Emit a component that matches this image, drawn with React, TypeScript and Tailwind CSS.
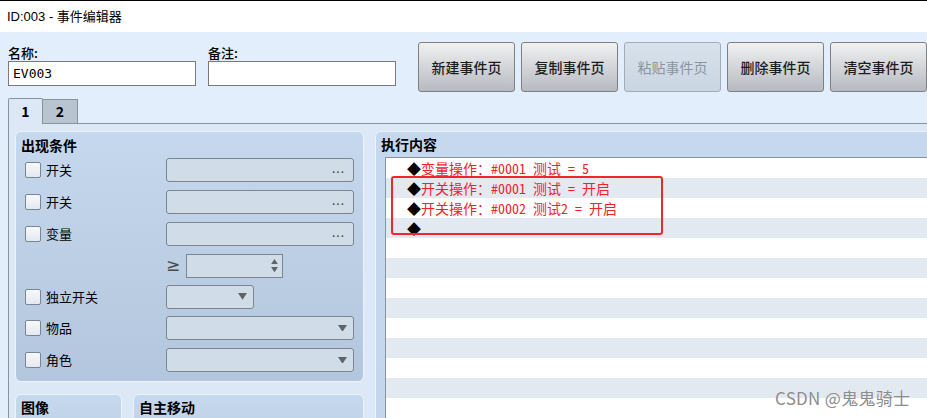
import React from 'react';

/* ── small pieces ──────────────────────────────── */

const Tri: React.FC<{ up?: boolean; size?: number }> = ({ up, size = 8 }) => (
  <svg width={size} height={size * 0.75} viewBox="0 0 8 6" className="block">
    {up ? <path d="M0 6 L4 0 L8 6 Z" fill="#5f6368" /> : <path d="M0 0 L8 0 L4 6 Z" fill="#5f6368" />}
  </svg>
);

const CheckBox: React.FC = () => (
  <div className="w-[16px] h-[16px] rounded-[2px] border border-[#7b8592] bg-linear-to-b from-[#f7f9fb] to-[#e4e9ef] shrink-0" />
);

const Field: React.FC<{ w: string; kind: 'dots' | 'drop' }> = ({ w, kind }) => (
  <div className={`${w} h-[24px] rounded-[3px] border border-[#7d8690] bg-[#d0dce8] flex items-center justify-end pr-[6px]`}>
    {kind === 'dots' ? (
      <span className="text-[12px] leading-none text-[#3a3a3a] tracking-[1px] -mt-[4px] mr-[2px]">...</span>
    ) : (
      <Tri size={9} />
    )}
  </div>
);

const CondRow: React.FC<{ label?: string; h?: string; children: React.ReactNode }> = ({ label, h = 'h-[32px]', children }) => (
  <div className={`flex items-center ${h}`}>
    <div className="w-[141px] flex items-center">
      {label && (
        <>
          <CheckBox />
          <span className="ml-[5px] text-[13px] leading-[16px]">{label}</span>
        </>
      )}
    </div>
    {children}
  </div>
);

const Btn: React.FC<{ label: string; disabled?: boolean }> = ({ label, disabled }) => (
  <div
    className={
      disabled
        ? 'w-[97px] h-[50px] shrink-0 rounded-[3px] border border-[#a3acb6] bg-linear-to-b from-[#d8e2ec] to-[#c9d5e1] text-[#8b949e] flex items-center justify-center text-[14px]'
        : 'w-[97px] h-[50px] shrink-0 rounded-[3px] border border-[#7f7f7f] bg-linear-to-b from-[#f1f1f1] to-[#b6bac1] text-[#1c1c1c] flex items-center justify-center text-[14px] font-medium'
    }
  >
    {label}
  </div>
);

const groupCls =
  'rounded-[6px] border border-[#edf3fa] bg-linear-to-b from-[#c6d8ed] to-[#b3c6dd]';

const lines = [
  '变量操作：#0001 测试 = 5',
  '开关操作：#0001 测试 = 开启',
  '开关操作：#0002 测试2 = 开启',
  '',
];

export default function App() {
  return (
    <div className="relative w-[927px] h-[418px] overflow-hidden bg-[#e2eefb] text-black font-['Noto_Sans_CJK_SC','Noto_Sans',sans-serif]">
      {/* Title bar */}
      <div className="h-[32px] bg-white border-t border-black flex items-center pl-[7px] text-[13px] font-['Liberation_Sans','Noto_Sans_CJK_SC',sans-serif]">
        ID:003 - 事件编辑器
      </div>

      <div className="pl-[8px]">
        {/* Name / note / buttons */}
        <div className="flex h-[66px]">
          <div className="w-[188px] pt-[12px]">
            <div className="text-[13px] leading-[17px] font-medium">名称:</div>
            <div className="h-[25px] border border-[#7a7a7a] bg-white flex items-center pl-[4px] text-[13px] font-['DejaVu_Sans_Mono',monospace]">
              EV003
            </div>
          </div>
          <div className="w-[188px] ml-[12px] pt-[12px]">
            <div className="text-[13px] leading-[17px] font-medium">备注:</div>
            <div className="h-[25px] border border-[#7a7a7a] bg-white" />
          </div>
          <div className="ml-[22px] mt-[10px] flex gap-[6px]">
            <Btn label="新建事件页" />
            <Btn label="复制事件页" />
            <Btn label="粘贴事件页" disabled />
            <Btn label="删除事件页" />
            <Btn label="清空事件页" />
          </div>
        </div>

        {/* Tabs */}
        <div className="flex items-end h-[26px]">
          <div className="w-[35px] h-[26px] border border-b-0 border-[#8a939d] bg-[#dce8f5] flex items-center justify-center text-[14px] font-semibold rounded-t-[2px]">
            1
          </div>
          <div className="w-[35px] h-[25px] border border-l-0 border-[#8a939d] bg-[#b8c4d0] flex items-center justify-center text-[14px] font-semibold">
            2
          </div>
          <div className="flex-1 border-b border-[#8a939d]" />
        </div>

        {/* Tab body */}
        <div className="border-l border-[#8a939d] bg-[#dce8f5] pl-[6px] pt-[7px] flex gap-[11px] h-[400px]">
          {/* Left column */}
          <div className="w-[349px] shrink-0">
            <div className={`${groupCls} h-[251px]`}>
              <div className="h-[22px] pt-[4px] pl-[5px] text-[14px] leading-[18px] font-bold">出现条件</div>
              <div className="pl-[9px]">
                <CondRow label="开关">
                  <Field w="w-[188px]" kind="dots" />
                </CondRow>
                <CondRow label="开关">
                  <Field w="w-[188px]" kind="dots" />
                </CondRow>
                <CondRow label="变量">
                  <Field w="w-[188px]" kind="dots" />
                </CondRow>
                <CondRow h="h-[31px]">
                  <span className="w-[20px] text-[17px] leading-none text-[#4a4a4a] font-['DejaVu_Sans',sans-serif]">≥</span>
                  <div className="w-[97px] h-[24px] border border-[#7d8690] bg-[#d0dce8] flex flex-col items-end justify-center gap-[3px] pr-[4px]">
                    <Tri up size={7} />
                    <Tri size={7} />
                  </div>
                </CondRow>
                <CondRow label="独立开关" h="h-[31px]">
                  <Field w="w-[88px]" kind="drop" />
                </CondRow>
                <CondRow label="物品">
                  <Field w="w-[188px]" kind="drop" />
                </CondRow>
                <CondRow label="角色">
                  <Field w="w-[188px]" kind="drop" />
                </CondRow>
              </div>
            </div>

            <div className="mt-[12px] flex gap-[11px]">
              <div className={`${groupCls} w-[107px] h-[120px]`}>
                <div className="h-[24px] pt-[3px] pl-[5px] text-[14px] leading-[18px] font-bold">图像</div>
              </div>
              <div className={`${groupCls} w-[231px] h-[120px]`}>
                <div className="h-[24px] pt-[3px] pl-[5px] text-[14px] leading-[18px] font-bold">自主移动</div>
              </div>
            </div>
          </div>

          {/* Right column: command list */}
          <div className={`${groupCls} w-[600px] shrink-0 h-[320px] from-[#c3d6ec] to-[#c3d6ec]`}>
            <div className="h-[25px] pl-[5px] flex items-center text-[14px] font-bold">执行内容</div>
            <div className="ml-[9px] border border-[#8a939d] bg-white">
              {Array.from({ length: 14 }).map((_, i) => (
                <div
                  key={i}
                  className={`h-[20px] flex items-center pl-[21px] text-[14px] leading-none font-['Noto_Sans_Mono_CJK_SC','DejaVu_Sans_Mono','Noto_Sans_CJK_SC',monospace] ${
                    i % 2 === 1 ? 'bg-[#e2e9f1]' : 'bg-white'
                  }`}
                >
                  {i < lines.length && (
                    <>
                      <span className="text-black">◆</span>
                      <span className="text-[#f4202a] whitespace-pre">{lines[i]}</span>
                    </>
                  )}
                </div>
              ))}
            </div>
          </div>
        </div>
      </div>

      {/* Red annotation box */}
      <div className="absolute left-[391px] top-[176px] w-[272px] h-[59px] border-2 border-[#f0262a] rounded-[3px] pointer-events-none" />

      {/* Watermark */}
      <div className="absolute left-[775px] top-[386px] text-[17px] leading-[24px] tracking-[0.3px] text-[#8c8c8c] font-['Noto_Sans_CJK_SC',sans-serif] [text-shadow:0_0_1px_#fff]">
        CSDN @鬼鬼骑士
      </div>
    </div>
  );
}
